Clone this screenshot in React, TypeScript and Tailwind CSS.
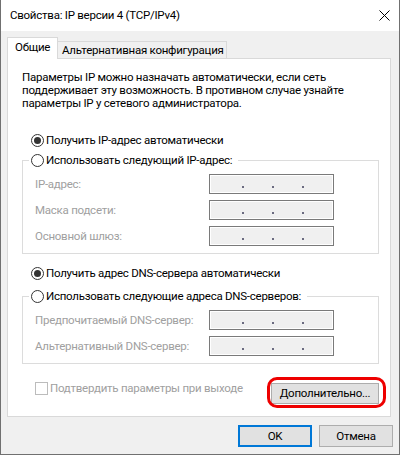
import React from "react";

function Radio({ checked, label }: { checked?: boolean; label: string }) {
  return (
    <span className="flex h-[14px] items-center gap-[2px]">
      <span className="flex h-[13px] w-[13px] items-center justify-center rounded-full border border-[#333] bg-white">
        {checked && <span className="h-[7px] w-[7px] rounded-full bg-[#333]" />}
      </span>
      <span className="whitespace-nowrap text-black">{label}</span>
    </span>
  );
}

function IpBox() {
  return (
    <div className="flex h-[20px] w-[125px] items-end gap-[28px] border border-[#7a7a7a] bg-[#f0f0f0] pb-[5px] pl-[32px] shadow-[inset_0_0_0_1px_#fff]">
      <span className="h-[2px] w-[2px] bg-[#6b6b80]" />
      <span className="h-[2px] w-[2px] bg-[#6b6b80]" />
      <span className="h-[2px] w-[2px] bg-[#6b6b80]" />
    </div>
  );
}

function Field({ label }: { label: string }) {
  return (
    <div className="flex h-[20px] items-center">
      <span className="w-[174px] whitespace-nowrap text-[#a0a0a0]">{label}</span>
      <IpBox />
    </div>
  );
}

function Group({ legend, fields }: { legend: string; fields: string[] }) {
  return (
    <fieldset className="ml-[14px] w-[357px] border border-[#dcdcdc]">
      <legend className="ml-[6px] pl-[2px] pr-[6px]">
        <Radio label={legend} />
      </legend>
      <div className="flex flex-col gap-[6px] pb-[7px] pl-[12px] pt-[7px]">
        {fields.map((f) => (
          <Field key={f} label={f} />
        ))}
      </div>
    </fieldset>
  );
}

export default function App() {
  return (
    <div className="flex h-[455px] w-[400px] flex-col border-x border-b border-[#707070] bg-[#f0f0f0] font-['Roboto',sans-serif] text-[11.5px] leading-[15px] tracking-[-0.25px] text-black">
      {/* title bar */}
      <div className="flex h-[31px] shrink-0 items-center justify-between bg-white pl-[9px] pr-[9px]">
        <span>Свойства: IP версии 4 (TCP/IPv4)</span>
        <svg width="11" height="11" viewBox="0 0 11 11" className="mb-[1px]">
          <path d="M0.5 0.5 L10.5 10.5 M10.5 0.5 L0.5 10.5" stroke="#000" strokeWidth="1" />
        </svg>
      </div>

      {/* tabs */}
      <div className="ml-[6px] mt-[6px] flex items-end">
        <div className="relative z-10 -mb-px h-[22px] w-[51px] border-x border-t border-[#d9d9d9] bg-white pl-[7px] pt-[2px]">
          Общие
        </div>
        <div className="h-[17px] w-[169px] whitespace-nowrap border-r border-t border-[#d9d9d9] bg-[#f0f0f0] pl-[4px] pt-[1px]">
          Альтернативная конфигурация
        </div>
      </div>

      {/* panel */}
      <div className="ml-[6px] flex h-[359px] w-[384px] shrink-0 flex-col border border-[#d9d9d9] bg-white">
        <p className="whitespace-nowrap pl-[14px] pt-[12px] leading-[13px]">
          Параметры IP можно назначать автоматически, если сеть
          <br />
          поддерживает эту возможность. В противном случае узнайте
          <br />
          параметры IP у сетевого администратора.
        </p>

        <div className="ml-[23px] mt-[23px]">
          <Radio checked label="Получить IP-адрес автоматически" />
        </div>
        <div className="mt-[6px]">
          <Group
            legend="Использовать следующий IP-адрес:"
            fields={["IP-адрес:", "Маска подсети:", "Основной шлюз:"]}
          />
        </div>

        <div className="ml-[23px] mt-[12px]">
          <Radio checked label="Получить адрес DNS-сервера автоматически" />
        </div>
        <div className="mt-[9px]">
          <Group
            legend="Использовать следующие адреса DNS-серверов:"
            fields={["Предпочитаемый DNS-сервер:", "Альтернативный DNS-сервер:"]}
          />
        </div>

        <div className="mt-[18px] flex items-start">
          <div className="ml-[27px] flex items-start gap-[2px] leading-[13px]">
            <span className="h-[13px] w-[13px] border border-[#bcbcbc] bg-white" />
            <span className="whitespace-nowrap text-[#a0a0a0]">Подтвердить параметры при выходе</span>
          </div>
          <div className="relative ml-auto mr-[11px] mt-px">
            <button className="h-[21px] w-[108px] border border-[#adadad] bg-[#e1e1e1] leading-[15px]">
              Дополнительно...
            </button>
            <span className="pointer-events-none absolute left-[-4px] top-[-6px] h-[31px] w-[119px] rounded-[10px] border-[3px] border-[#ee0000]" />
          </div>
        </div>
      </div>

      {/* dialog buttons */}
      <div className="mt-[8px] flex justify-end gap-[7px] pr-[6px]">
        <button className="h-[22px] w-[74px] border-2 border-[#0078d7] bg-[#e1e1e1] leading-[15px]">OK</button>
        <button className="h-[22px] w-[74px] border border-[#adadad] bg-[#e1e1e1] leading-[15px]">Отмена</button>
      </div>
    </div>
  );
}
